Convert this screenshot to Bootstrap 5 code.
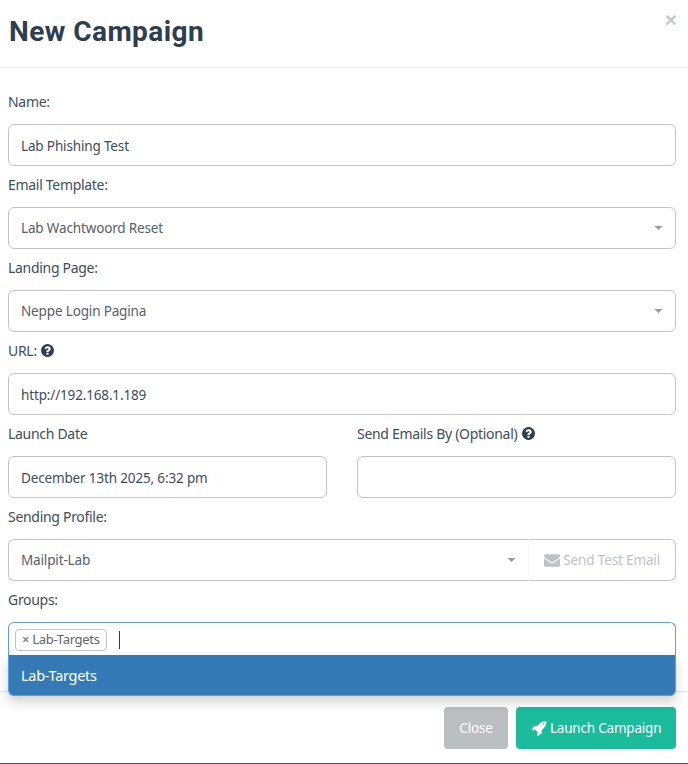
<!DOCTYPE html>
<html lang="en">
<head>
    <meta charset="UTF-8">
    <meta name="viewport" content="width=device-width, initial-scale=1.0">
    <title>New Campaign</title>
    <link href="https://cdn.jsdelivr.net/npm/bootstrap@5.3.0/dist/css/bootstrap.min.css" rel="stylesheet">
    <style>
        body {
            background-color: #fff;
            color: #3d4d5c;
            font-family: "Noto Sans", "Liberation Sans", sans-serif;
            font-size: 14px;
            letter-spacing: -0.3px;
        }
        .campaign-modal {
            height: 764px;
            border: 0;
            border-bottom: 1px solid #555;
            border-radius: 0;
        }
        .campaign-head {
            height: 68px;
            padding: 0 12px 0 8px;
            border-bottom: 1px solid #e5e5e5;
            align-items: flex-start;
        }
        .campaign-title {
            margin: 12px 0 0 1px;
            font-family: Roboto, "Liberation Sans", sans-serif;
            font-size: 28px;
            font-weight: 700;
            line-height: 40px;
            letter-spacing: 0.45px;
            color: #2c3e50;
        }
        .close-x {
            margin: 13px -1px 0 0;
            padding: 0;
            border: 0;
            background: none;
            color: #c8c8c8;
            font-family: "Liberation Sans", sans-serif;
            font-size: 21px;
            font-weight: 700;
            line-height: 14px;
        }
        .campaign-body {
            height: 623px;
            padding: 15px 12px 0 8px;
            flex: none;
        }
        .field-label {
            display: block;
            height: 41px;
            margin: 0;
            padding-top: 9px;
            line-height: 20px;
        }
        .form-control.campaign-input, .form-select.campaign-input {
            height: 42px;
            padding: 1px 12px 0;
            border: 1px solid #c4c4c4;
            border-radius: 6px;
            color: #3d4d5c;
            font-size: 13.5px;
            letter-spacing: -0.15px;
        }
        .form-select.campaign-input {
            color: #55606a;
            --bs-form-select-bg-img: url("data:image/svg+xml,%3csvg xmlns='http://www.w3.org/2000/svg' viewBox='0 0 8 4'%3e%3cpath fill='%23999' d='M0 0h8L4 4z'/%3e%3c/svg%3e");
            background-position: right 12px center;
            background-size: 9px 4px;
        }
        .date-row {
            --bs-gutter-x: 30px;
        }
        .btn.test-btn, .btn.test-btn:disabled {
            width: 148px;
            height: 42px;
            padding: 1px 0 0;
            flex: none;
            border: 1px solid #c4c4c4;
            border-left-color: #f8f8f8;
            border-radius: 0 6px 6px 0;
            background: #fff;
            color: #c0c3c6;
            font-size: 13.5px;
            letter-spacing: -0.15px;
            opacity: 1;
        }
        .test-btn svg {
            fill: #c0c3c6;
            vertical-align: -3px;
        }
        .help-icon {
            fill: #2c3e50;
            vertical-align: -2px;
        }
        .group-wrap {
            position: relative;
        }
        .group-box {
            height: 34px;
            padding: 6px 6px 0;
            border: 1px solid #5d9fd8;
            border-bottom: 0;
            border-radius: 6px 6px 0 0;
            background: #fff;
        }
        .group-tag {
            height: 22px;
            padding: 0 6px;
            border: 1px solid #c4c4c4;
            border-radius: 4px;
            color: #5a656f;
            font-size: 13px;
            line-height: 19px;
        }
        .tag-x {
            color: #888;
            font-weight: 700;
        }
        .text-caret {
            width: 1px;
            height: 18px;
            margin: 2px 0 0 12px;
            background: #2c3e50;
        }
        .group-menu {
            position: absolute;
            z-index: 5;
            top: 33px;
            left: 0;
            right: 0;
            height: 41px;
            padding: 0 12px;
            border: 1px solid #5d9fd8;
            border-top: 0;
            border-radius: 0 0 6px 6px;
            background: #337ab7;
            box-shadow: 0 6px 12px rgba(0, 0, 0, 0.18);
            color: #fff;
            font-size: 14.5px;
            line-height: 40px;
        }
        .campaign-foot {
            height: 71px;
            padding: 15px 12px 0 8px;
            border-top: 1px solid #e5e5e5;
            align-items: flex-start;
        }
        .foot-btn {
            height: 42px;
            padding: 1px 0 0;
            border: 0;
            border-radius: 4px;
            color: #fff;
            font-size: 13.5px;
            letter-spacing: -0.2px;
        }
        .foot-close {
            width: 64px;
            background: #bbbfc2;
        }
        .foot-launch {
            width: 160px;
            background: #1abc9c;
        }
        .foot-launch svg {
            fill: #fff;
            vertical-align: -3px;
        }
    </style>
</head>
<body>
    <div class="modal-content campaign-modal">
        <div class="modal-header campaign-head">
            <h4 class="campaign-title">New Campaign</h4>
            <button type="button" class="close-x" aria-label="Close">&times;</button>
        </div>
        <div class="modal-body campaign-body">
            <label class="field-label">Name:</label>
            <input type="text" class="form-control campaign-input" value="Lab Phishing Test">

            <label class="field-label">Email Template:</label>
            <select class="form-select campaign-input"><option>Lab Wachtwoord Reset</option></select>

            <label class="field-label">Landing Page:</label>
            <select class="form-select campaign-input"><option>Neppe Login Pagina</option></select>

            <label class="field-label">URL:
                <svg class="help-icon" width="15" height="15" viewBox="0 0 1792 1792"><path d="M1024 1376v-192q0-14-9-23t-23-9h-192q-14 0-23 9t-9 23v192q0 14 9 23t23 9h192q14 0 23-9t9-23zm256-672q0-88-55.500-163t-138.500-116-170-41q-243 0-371 213-15 24 8 42l132 100q7 6 19 6 16 0 25-12 53-68 86-92 34-24 86-24 48 0 85.500 26t37.500 59q0 38-20 61t-68 45q-63 28-115.500 86.500t-52.500 125.500v36q0 14 9 23t23 9h192q14 0 23-9t9-23q0-19 21.500-49.500t54.500-49.500q32-18 49-28.500t46-35 44.500-48 28-60.500 12.500-81zm384 192q0 209-103 385.500t-279.500 279.500-385.500 103-385.500-103-279.500-279.500-103-385.500 103-385.500 279.500-279.500 385.500-103 385.500 103 279.500 279.500 103 385.500z"/></svg>
            </label>
            <input type="text" class="form-control campaign-input" value="http://192.168.1.189">

            <div class="row date-row">
                <div class="col-6">
                    <label class="field-label">Launch Date</label>
                    <input type="text" class="form-control campaign-input" value="December 13th 2025, 6:32 pm">
                </div>
                <div class="col-6">
                    <label class="field-label">Send Emails By (Optional)
                        <svg class="help-icon" width="15" height="15" viewBox="0 0 1792 1792"><path d="M1024 1376v-192q0-14-9-23t-23-9h-192q-14 0-23 9t-9 23v192q0 14 9 23t23 9h192q14 0 23-9t9-23zm256-672q0-88-55.500-163t-138.500-116-170-41q-243 0-371 213-15 24 8 42l132 100q7 6 19 6 16 0 25-12 53-68 86-92 34-24 86-24 48 0 85.500 26t37.500 59q0 38-20 61t-68 45q-63 28-115.500 86.500t-52.500 125.500v36q0 14 9 23t23 9h192q14 0 23-9t9-23q0-19 21.500-49.500t54.500-49.500q32-18 49-28.500t46-35 44.500-48 28-60.500 12.500-81zm384 192q0 209-103 385.500t-279.500 279.500-385.500 103-385.500-103-279.500-279.500-103-385.500 103-385.500 279.500-279.500 385.500-103 385.500 103 279.500 279.500 103 385.500z"/></svg>
                    </label>
                    <input type="text" class="form-control campaign-input">
                </div>
            </div>

            <label class="field-label">Sending Profile:</label>
            <div class="d-flex">
                <select class="form-select campaign-input rounded-end-0 border-end-0"><option>Mailpit-Lab</option></select>
                <button type="button" class="btn test-btn" disabled>
                    <svg width="16" height="16" viewBox="0 0 1792 1792"><path d="M1792 710v794q0 66-47 113t-113 47h-1472q-66 0-113-47t-47-113v-794q44 49 101 87 362 246 497 345 57 42 92.500 65.500t94.500 48 110 24.500h2q51 0 110-24.500t94.500-48 92.500-65.500q170-123 498-345 57-39 100-87zm0-294q0 79-49 151t-122 123q-376 261-468 325-10 7-42.500 30.500t-54 38-52 32.500-57.500 27-50 9h-2q-23 0-50-9t-57.500-27-52-32.500-54-38-42.500-30.500q-91-64-262-182.500t-205-142.500q-62-42-117-115.500t-55-136.500q0-78 41.500-130t118.500-52h1472q65 0 112.500 47t47.500 113z"/></svg>
                    Send Test Email
                </button>
            </div>

            <label class="field-label">Groups:</label>
            <div class="group-wrap">
                <div class="group-box d-flex align-items-start">
                    <span class="group-tag"><span class="tag-x">&times;</span> Lab-Targets</span>
                    <span class="text-caret"></span>
                </div>
                <div class="group-menu">Lab-Targets</div>
            </div>
        </div>
        <div class="modal-footer campaign-foot gap-2 justify-content-end">
            <button type="button" class="btn foot-btn foot-close m-0">Close</button>
            <button type="button" class="btn foot-btn foot-launch m-0">
                <svg width="16" height="16" viewBox="0 0 1792 1792"><path d="M1504 448q0-40-28-68t-68-28-68 28-28 68 28 68 68 28 68-28 28-68zm224-288q0 249-75.500 430.500t-253.500 360.500q-81 80-195 176l-20 379q-2 16-16 26l-384 224q-7 4-16 4-12 0-23-9l-64-64q-13-14-8-32l85-276-281-281-276 85q-3 1-9 1-14 0-23-9l-64-64q-17-19-5-39l224-384q10-14 26-16l379-20q96-114 176-195 188-187 358-258t431-71q14 0 24 9.500t10 22.500z"/></svg>
                Launch Campaign
            </button>
        </div>
    </div>
    <script src="https://cdn.jsdelivr.net/npm/bootstrap@5.3.0/dist/js/bootstrap.bundle.min.js"></script>
</body>
</html>
